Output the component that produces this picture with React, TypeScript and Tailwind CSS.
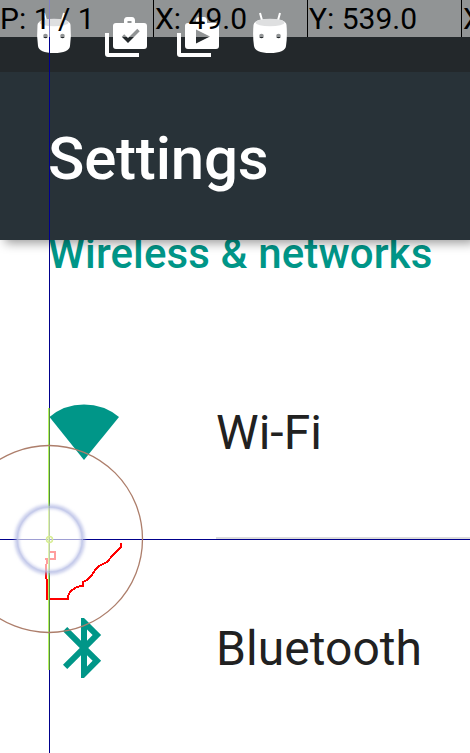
import type { ReactNode } from "react";

function AndroidHead() {
  return (
    <svg width="36" height="42" viewBox="0 0 36 42" className="shrink-0">
      <path d="M8 1 L10.500 10 M28 1 L25.500 10" stroke="#fff" strokeWidth="2" fill="none" />
      <path d="M1.500 13 Q2 7 18 7 Q34 7 34.500 13 Q35.500 24 34 34 Q33 41 18 41 Q3 41 2 34 Q0.500 24 1.500 13Z" fill="#fff" />
      <ellipse cx="18" cy="10.500" rx="14.500" ry="3.800" fill="#bcbfc0" />
      <circle cx="9.500" cy="24" r="2.300" fill="#23282b" />
      <circle cx="26.500" cy="24" r="2.300" fill="#23282b" />
    </svg>
  );
}

function StackIcon({ children }: { children: ReactNode }) {
  return (
    <svg width="44" height="42" viewBox="0 0 44 42" className="shrink-0">
      <path d="M0 17 H4 V37 H34 V41 H3 Q0 41 0 38Z" fill="#fff" />
      <path
        fillRule="evenodd"
        fill="#fff"
        d="M19 7 V4 Q19.500 1 22 1 H27 Q29.500 1 30 4 V7 H39 Q42 7 42 10 V30 Q42 33 39 33 H11 Q8 33 8 30 V10 Q8 7 11 7Z M22.500 5 V7 H26.500 V5Z"
      />
      {children}
    </svg>
  );
}

function SettingRow({ icon, label, divider }: { icon: ReactNode; label: string; divider?: boolean }) {
  return (
    <div className="flex h-[216px] shrink-0">
      <div className="flex w-[216px] items-center pl-12">{icon}</div>
      <div
        className={
          divider
            ? "flex flex-1 items-center border-b-2 border-[#dcdcdc] pt-1.5"
            : "flex flex-1 items-center pt-1"
        }
      >
        <span className="text-[48px] leading-[56px] tracking-[0.05px] text-[#212121]">{label}</span>
      </div>
    </div>
  );
}

export default function App() {
  return (
    <div className="relative flex h-[753px] w-[470px] flex-col overflow-hidden bg-white font-['Roboto',sans-serif]">
      <div className="z-20 flex h-[72px] shrink-0 bg-[#23282b] pl-9 pt-3">
        <div className="flex w-[69px]"><AndroidHead /></div>
        <div className="flex w-[72px] pt-1">
          <StackIcon>
            <path d="M18 19.500 L23 24.500 L33.500 14" fill="none" stroke="#23282b" strokeWidth="3.500" />
          </StackIcon>
        </div>
        <div className="flex w-[75px] pt-1">
          <StackIcon>
            <path d="M19 13.500 V27.500 L33 20.500Z" fill="#23282b" />
          </StackIcon>
        </div>
        <AndroidHead />
      </div>

      <header className="z-10 flex h-[168px] shrink-0 items-center bg-[#283238] pl-12 pt-1.5 shadow-[5px_3px_10px_0px_rgba(0,0,0,0.4)]">
        <h1 className="text-[60px] font-medium leading-[70px] tracking-[-0.2px] text-white">Settings</h1>
      </header>

      <h2 className="-mt-[11px] mb-[44px] h-[50px] shrink-0 whitespace-nowrap pl-12 text-[42px] font-medium leading-[50px] tracking-[0.12px] text-[#009688]">
        Wireless &amp; networks
      </h2>

      <SettingRow
        divider
        label="Wi-Fi"
        icon={
          <svg width="72" height="72" viewBox="0 0 72 72">
            <path d="M1.500 22 Q16 9.500 36 9.500 Q56 9.500 71 22 L36 65Z" fill="#009688" />
          </svg>
        }
      />
      <SettingRow
        label="Bluetooth"
        icon={
          <svg width="72" height="72" viewBox="0 -0.330 24 24">
            <path
              fill="#009688"
              d="M17.710 7.710L12 2h-1v7.590L6.410 5 5 6.410 10.590 12 5 17.590 6.410 19 11 14.410V22h1l5.710-5.710-4.300-4.290 4.300-4.290zM13 5.830l1.880 1.880L13 9.590V5.830zm1.880 10.460L13 18.170v-3.760l1.880 1.880z"
            />
          </svg>
        }
      />

      <svg className="absolute inset-0 z-20" width="470" height="753" viewBox="0 0 470 753">
        <defs>
          <filter id="glow" x="-30%" y="-30%" width="160%" height="160%">
            <feGaussianBlur stdDeviation="1.700" />
          </filter>
        </defs>
        <path d="M49.500 0V753M0 539.500H470" stroke="#00008c" strokeWidth="1" shapeRendering="crispEdges" />
        <path
          d="M49 540V552H55V559H45M47 559V563L46 565V578L47 580V599H68V596L70 592L75 588L80 586H83V582L87 580L92 575L95 570L99 566L107 562L113 555L116 552L121 547V543"
          fill="none"
          stroke="#ff0000"
          strokeWidth="2"
          shapeRendering="crispEdges"
        />
        <circle cx="49.500" cy="539.500" r="32" fill="#fff" fillOpacity="0.620" />
        <path d="M48.500 408V670" stroke="#b4f45c" strokeWidth="1" />
        <path d="M49.500 408V670" stroke="#568747" strokeWidth="1" />
        <path d="M49.500 508V571" stroke="#b9cba9" strokeWidth="1" />
        <path d="M48.500 508V571" stroke="#def3ac" strokeWidth="1" />
        <circle cx="49.800" cy="539.500" r="33" fill="none" stroke="#a5aee0" strokeOpacity="0.600" strokeWidth="4.500" filter="url(#glow)" />
        <circle cx="49.800" cy="539.500" r="32.500" fill="none" stroke="#c0c6e8" strokeOpacity="0.600" strokeWidth="1.500" />
        <circle cx="49.500" cy="539.500" r="3" fill="none" stroke="#d7ed93" strokeWidth="1.500" />
        <circle cx="49" cy="539" r="93.500" fill="none" stroke="#ad7e6b" strokeWidth="1.300" />
      </svg>

      <div className="absolute left-0 top-0 z-30 flex h-[37px] w-[616px] bg-white/50 text-[30px] leading-[37px] text-black">
        <span className="w-[154px] shrink-0 whitespace-pre border-r border-black">P: 1 / 1</span>
        <span className="w-[154px] shrink-0 border-r border-black pl-px">X: 49.0</span>
        <span className="w-[154px] shrink-0 border-r border-black pl-px">Y: 539.0</span>
        <span className="w-[154px] shrink-0 pl-px">Xv: 0.0</span>
      </div>
    </div>
  );
}
